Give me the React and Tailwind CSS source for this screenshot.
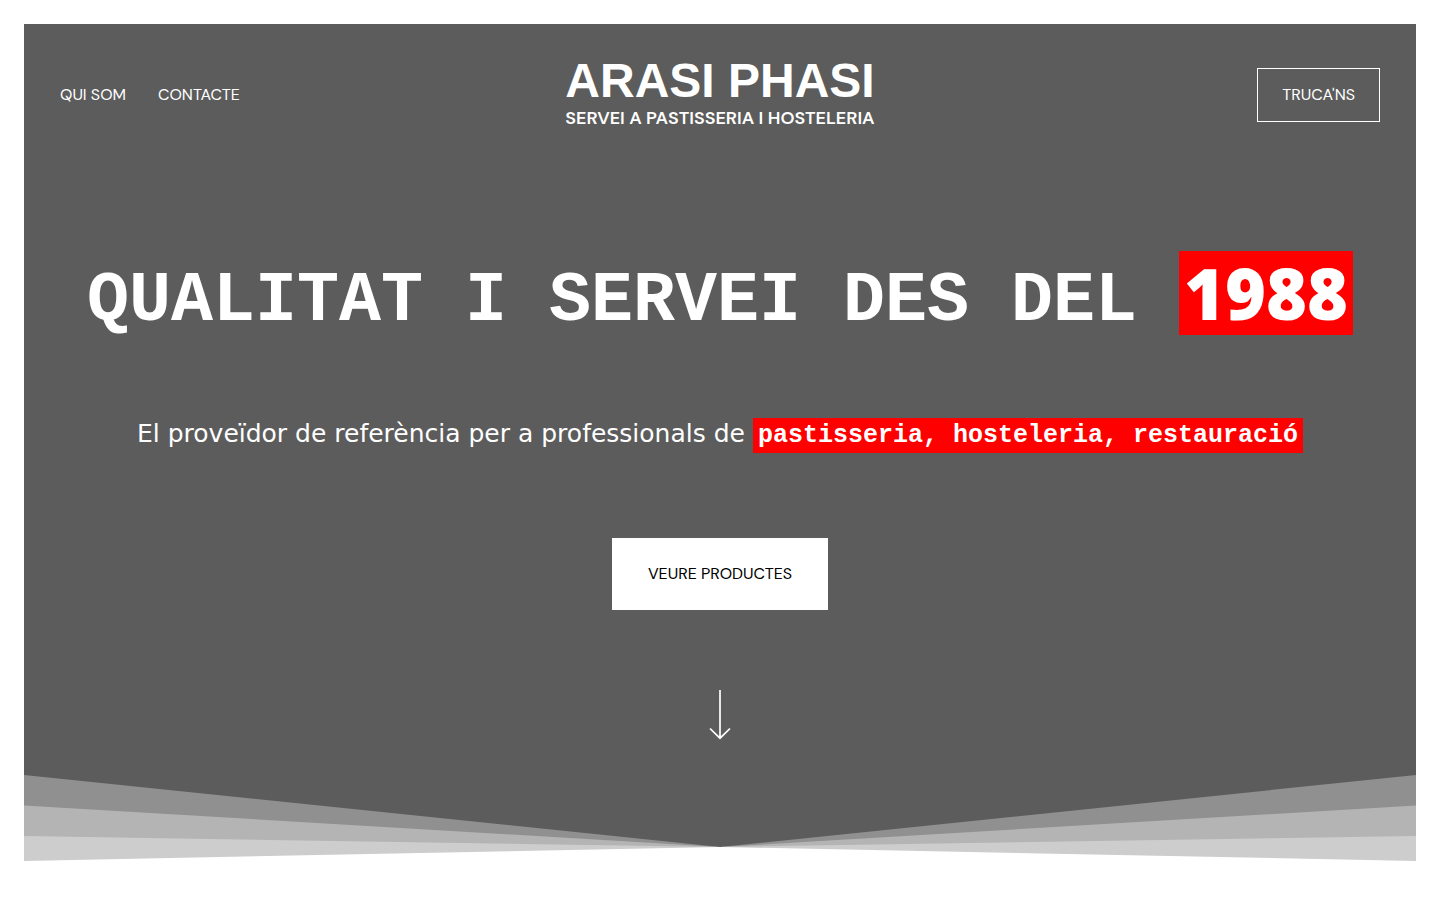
const NAV_LINKS = [
  { label: 'QUI SOM', href: '#qui-som' },
  { label: 'CONTACTE', href: '#contacte' },
];

export default function App() {
  return (
    <div className="min-h-screen bg-white p-6">
      <div className="bg-[#5c5c5c] text-white">
        <Header />
        <Hero />
        <FanDivider />
      </div>
    </div>
  );
}

function Header() {
  return (
    <header className="grid grid-cols-[1fr_auto_1fr] items-center px-9 pt-9">
      <nav className="flex gap-8 font-['DM_Sans',Inter,sans-serif] text-[16px] leading-[22px]">
        {NAV_LINKS.map((link) => (
          <a key={link.href} href={link.href} className="hover:opacity-70">
            {link.label}
          </a>
        ))}
      </nav>
      <a href="#inici" className="flex flex-col items-center whitespace-nowrap">
        <span className="font-['Liberation_Sans',sans-serif] text-[48px] leading-[42px] font-bold">
          ARASI PHASI
        </span>
        <span className="pt-1 font-['DM_Sans',Inter,sans-serif] text-[18px] leading-6 font-semibold">
          SERVEI A PASTISSERIA I HOSTELERIA
        </span>
      </a>
      <a
        href="#trucans"
        className="justify-self-end border border-white px-6 py-[15px] font-['DM_Sans',Inter,sans-serif] text-[16px] leading-[22px] hover:bg-white hover:text-black"
      >
        TRUCA'NS
      </a>
    </header>
  );
}

function Hero() {
  return (
    <main className="flex flex-col items-center px-9 pt-[121px] pb-[35px] text-center">
      <h1 className="font-['Liberation_Mono',monospace] text-[70px] leading-[84px] font-bold">
        QUALITAT I SERVEI DES DEL{' '}
        <span className="inline-block bg-[#ff0000] px-[5px] font-['Open_Sans',sans-serif] font-extrabold">
          1988
        </span>
      </h1>
      <p className="mt-[72px] font-['DejaVu_Sans',sans-serif] text-[25px] leading-[35px]">
        El proveïdor de referència per a professionals de{' '}
        <span className="inline-block bg-[#ff0000] px-[5px] font-['Liberation_Mono',monospace] font-bold">
          pastisseria, hosteleria, restauració
        </span>
      </p>
      <a
        href="#productes"
        className="mt-[85px] bg-white px-9 py-[25px] font-['DM_Sans',Inter,sans-serif] text-[16px] leading-[22px] text-black hover:bg-neutral-200"
      >
        VEURE PRODUCTES
      </a>
      <a href="#contingut" aria-label="Baixar" className="mt-20">
        <svg width="22" height="50" viewBox="0 0 22 50" fill="none" stroke="white" strokeWidth="1.7">
          <path d="M11 0v48M1 38.5l10 9.7l10-9.7" />
        </svg>
      </a>
    </main>
  );
}

function FanDivider() {
  return (
    <svg
      className="block h-[101px] w-full"
      viewBox="0 0 1392 101"
      preserveAspectRatio="none"
      aria-hidden="true"
    >
      <path d="M0 0L696 72L1392 0V101H0z" fill="#909090" />
      <path d="M0 30.5L696 72L1392 30.5V101H0z" fill="#b4b4b4" />
      <path d="M0 61L696 72L1392 61V101H0z" fill="#cdcdcd" />
      <path d="M0 86L696 72L1392 86V101H0z" fill="white" />
    </svg>
  );
}
